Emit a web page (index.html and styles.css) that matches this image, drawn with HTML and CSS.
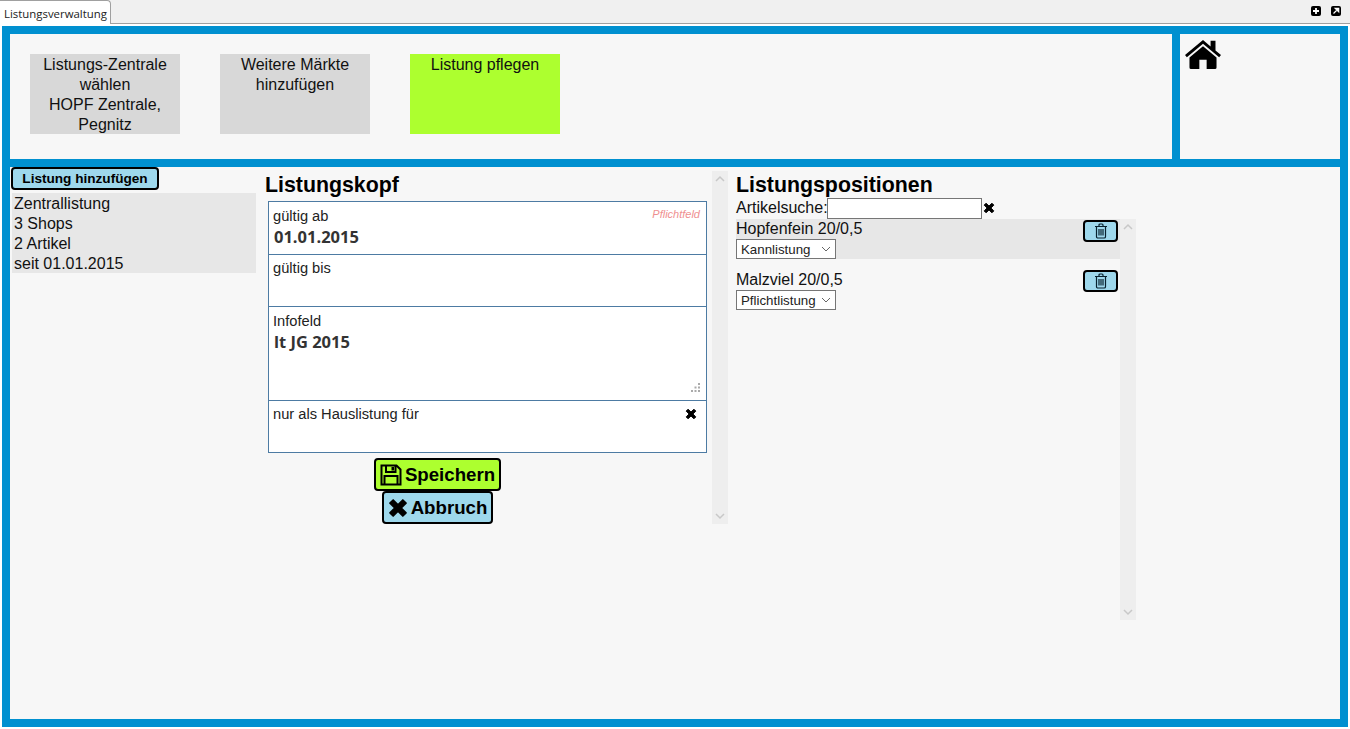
FILE: index.html
```html
<!DOCTYPE html>
<html lang="de">
<head>
<meta charset="utf-8">
<title>Listungsverwaltung</title>
<link rel="stylesheet" href="styles.css">
</head>
<body>
<svg class="defs" width="0" height="0" aria-hidden="true">
  <defs>
    <symbol id="x" viewBox="0 0 12 12"><path d="M1.2 3.1 3.1 1.2 6 4.1 8.9 1.2 10.8 3.1 7.9 6 10.8 8.9 8.9 10.8 6 7.9 3.1 10.8 1.2 8.9 4.1 6Z" fill="currentColor" stroke="currentColor" stroke-width="1" stroke-linejoin="round"/></symbol>
    <symbol id="trash" viewBox="0 0 14 16"><path d="M1 3.5h12M5 3.5V2a1 1 0 0 1 1-1h2a1 1 0 0 1 1 1v1.5M2.5 3.5v10.2A1.3 1.3 0 0 0 3.8 15h6.400a1.300 1.300 0 0 0 1.300-1.300V3.500M5 6v6.500M7 6v6.500M9 6v6.500" fill="none" stroke="currentColor" stroke-width="1.200"/></symbol>
    <symbol id="up" viewBox="0 0 16 16"><path d="M4 10 8 6 12 10" fill="none" stroke="currentColor" stroke-width="1.500"/></symbol>
    <symbol id="down" viewBox="0 0 16 16"><path d="M4 6 8 10 12 6" fill="none" stroke="currentColor" stroke-width="1.500"/></symbol>
  </defs>
</svg>
<header class="tabbar">
  <div class="tab">Listungsverwaltung</div>
  <div class="win-icons">
    <svg class="win-icon" viewBox="0 0 10 10"><rect width="10" height="10" rx="2" fill="#000"/><path d="M5 2v6M2 5h6" stroke="#fff" stroke-width="1.800"/></svg>
    <svg class="win-icon" viewBox="0 0 10 10"><rect width="10" height="10" rx="2" fill="#000"/><path d="M2.500 7.500 6 4M4.200 2.300H7.700V5.800Z" stroke="#fff" stroke-width="1.200" fill="#fff"/></svg>
  </div>
</header>
<main class="frame">
  <section class="top">
    <nav class="steps">
      <div class="step">Listungs-Zentrale wählen<br>HOPF Zentrale, Pegnitz</div>
      <div class="step">Weitere Märkte hinzufügen</div>
      <div class="step step-active">Listung pflegen</div>
    </nav>
    <div class="home">
      <svg class="home-icon" viewBox="0.7 0.8 34.6 28.2" preserveAspectRatio="none"><path d="M18 .8 0.700 15.500 2.500 17.600 18 4.400 33.500 17.600 35.300 15.500 30 11V1.500H25.300V7Z" fill="#000"/><path d="M18 6.800 5 17.800V27.500A1.500 1.500 0 0 0 6.500 29H14.500V20H21.500V29H29.500A1.500 1.500 0 0 0 31 27.500V17.800Z" fill="#000"/></svg>
    </div>
  </section>
  <section class="content">
    <aside class="list-col">
      <button class="btn btn-add">Listung hinzufügen</button>
      <div class="card">Zentrallistung<br>3 Shops<br>2 Artikel<br>seit 01.01.2015</div>
    </aside>
    <section class="head-col">
      <div class="head-main">
        <h2 class="title title-head">Listungskopf</h2>
        <div class="form">
          <div class="row row-std">
            <span class="required">Pflichtfeld</span>
            <div class="label">gültig ab</div>
            <div class="value">01.01.2015</div>
          </div>
          <div class="row row-std">
            <div class="label">gültig bis</div>
          </div>
          <div class="row row-info">
            <div class="label">Infofeld</div>
            <div class="value">lt JG 2015</div>
            <svg class="grip" viewBox="0 0 10 10"><g fill="#aaa"><rect x="8" y="1" width="2" height="2"/><rect x="8" y="4.500" width="2" height="2"/><rect x="8" y="8" width="2" height="2"/><rect x="4.500" y="4.500" width="2" height="2"/><rect x="4.500" y="8" width="2" height="2"/><rect x="1" y="8" width="2" height="2"/></g></svg>
          </div>
          <div class="row row-house">
            <div class="label">nur als Hauslistung für</div>
            <svg class="x-icon"><use href="#x"/></svg>
          </div>
        </div>
        <div class="actions">
          <button class="btn btn-big btn-save">
            <svg class="btn-icon" viewBox="0 0 22 22"><path d="M1.500 1.500H16.500L20.500 5.500V20.500H1.500Z M6 1.500V8H15.500V1.500 M4.500 20.500V12H17.500V20.500" fill="none" stroke="#000" stroke-width="2"/><rect x="11.500" y="3" width="2.500" height="3.500" fill="#000"/></svg>Speichern
          </button>
          <button class="btn btn-big btn-cancel">
            <svg class="btn-icon btn-icon-x"><use href="#x"/></svg>Abbruch
          </button>
        </div>
      </div>
      <div class="scrollbar">
        <svg class="arrow"><use href="#up"/></svg>
        <svg class="arrow"><use href="#down"/></svg>
      </div>
    </section>
    <section class="pos-col">
      <h2 class="title">Listungspositionen</h2>
      <div class="search">
        <label for="artikel">Artikelsuche:</label><input id="artikel" class="search-input" type="text">
        <svg class="x-icon"><use href="#x"/></svg>
      </div>
      <div class="pos-list">
        <div class="pos-items">
          <div class="item item-selected">
            <div class="item-main">
              <div>Hopfenfein 20/0,5</div>
              <select class="sel"><option>Kannlistung</option></select>
            </div>
            <button class="btn btn-trash"><svg class="trash-icon"><use href="#trash"/></svg></button>
          </div>
          <div class="item">
            <div class="item-main">
              <div>Malzviel 20/0,5</div>
              <select class="sel"><option>Pflichtlistung</option></select>
            </div>
            <button class="btn btn-trash"><svg class="trash-icon"><use href="#trash"/></svg></button>
          </div>
        </div>
        <div class="scrollbar">
          <svg class="arrow"><use href="#up"/></svg>
          <svg class="arrow"><use href="#down"/></svg>
        </div>
      </div>
    </section>
  </section>
</main>
</body>
</html>
```
FILE: styles.css
```css
* { box-sizing: border-box; }
html, body { margin: 0; height: 100%; }
body {
  width: 1350px;
  height: 729px;
  overflow: hidden;
  background: #fff;
  color: #111;
  font-family: "Liberation Sans", Arial, sans-serif;
  font-size: 16px;
  line-height: 20px;
}
.defs { position: absolute; }
.tabbar {
  height: 24px;
  margin-bottom: 2px;
  background: #f0f0f0;
  border-bottom: 1px solid #a0a0a0;
  display: flex;
  justify-content: space-between;
}
.tab {
  width: 111px;
  height: 24px;
  background: #fff;
  border: 1px solid #a0a0a0;
  border-left: 0;
  border-bottom: 0;
  border-radius: 0 4px 0 0;
  padding: 4px 0 0 4px;
  font-family: "Open Sans", sans-serif;
  font-size: 11.4px;
  line-height: 18px;
  color: #222;
  white-space: nowrap;
}
.win-icons { display: flex; gap: 10px; padding: 6px 9px 0 0; }
.win-icon { width: 10px; height: 10px; }
.frame {
  margin: 0 2px;
  height: 701px;
  display: flex;
  flex-direction: column;
  gap: 8px;
  background: #0090d0;
  border: 8px solid #0090d0;
}
.top { height: 125px; display: flex; gap: 8px; }
.steps {
  width: 1162px;
  background: #f7f7f7;
  display: flex;
  gap: 40px;
  padding: 20px;
}
.step {
  width: 150px;
  height: 80px;
  padding-top: 1px;
  background: #d8d8d8;
  text-align: center;
}
.step-active { background: #adff2f; }
.home { flex: 1; background: #f7f7f7; padding: 6px 5px; }
.home-icon { display: block; width: 36px; height: 29px; }
.content {
  flex: 1;
  background: #f7f7f7;
  display: flex;
  align-items: flex-start;
}
.list-col { width: 245px; margin-left: 1px; margin-right: 9px; }
.btn {
  display: flex;
  align-items: center;
  justify-content: center;
  padding: 0;
  border: 2px solid #000;
  border-radius: 4px;
  background: #9ed8ec;
  color: #000;
  font-family: "Liberation Sans", Arial, sans-serif;
  font-weight: bold;
}
.btn-add { width: 148px; height: 23px; font-size: 13.600px; }
.card {
  margin: 3px 0 0 1px;
  height: 80px;
  padding: 1px 0 0 2px;
  background: #e7e7e7;
}
.head-col { display: flex; width: 463px; margin-right: 8px; margin-top: 4px; }
.head-main { width: 447px; }
.title {
  margin: 0;
  height: 26px;
  font-size: 21.330px;
  line-height: 28px;
  font-weight: bold;
  color: #000;
}
.title-head { margin-bottom: 4px; }
.form {
  width: 439px;
  margin: 0 0 0 3px;
  border: 1px solid #4d7ba3;
  background: #fff;
}
.row {
  position: relative;
  padding: 5px 4px 0;
  border-bottom: 1px solid #4d7ba3;
}
.row:last-child { border-bottom: 0; }
.row-std { height: 53px; }
.row-std + .row-std { height: 52px; padding-top: 4px; }
.row-info { height: 94px; }
.row-house { height: 51px; padding-top: 4px; }
.label { font-size: 14.670px; line-height: 19px; color: #222; }
.value {
  margin-top: -1px;
  padding-left: 1px;
  font-family: "Open Sans", sans-serif;
  font-size: 16.500px;
  line-height: 23px;
  font-weight: 700;
  color: #333;
}
.required {
  position: absolute;
  top: 5px;
  right: 6px;
  font-size: 11px;
  line-height: 14px;
  font-style: italic;
  color: #ef8f8f;
}
.grip { position: absolute; right: 6px; bottom: 8px; width: 10px; height: 10px; }
.x-icon { width: 12px; height: 12px; color: #000; flex: none; }
.row-house .x-icon { position: absolute; top: 7px; right: 9px; }
.actions {
  display: flex;
  flex-direction: column;
  align-items: center;
  width: 345px;
  margin-top: 5px;
}
.btn-big { height: 33px; font-size: 18.670px; gap: 3px; }
.btn-save { width: 127px; background: #adff2f; }
.btn-cancel { width: 111px; }
.btn-icon { width: 22px; height: 22px; flex: none; }
.btn-icon-x { width: 20px; height: 20px; }
.scrollbar {
  width: 16px;
  background: #eee;
  display: flex;
  flex-direction: column;
  justify-content: space-between;
  color: #c8c8c8;
}
.head-col > .scrollbar { height: 353px; }
.arrow { width: 16px; height: 16px; display: block; }
.pos-col { width: 400px; margin-top: 4px; }
.search { display: flex; align-items: center; height: 22px; }
.search-input {
  width: 155px;
  height: 21px;
  margin: 0 0 0 -1px;
  padding: 0 2px;
  border: 1px solid #767676;
  background: #fff;
}
.search .x-icon { margin-left: 1px; }
.pos-list { display: flex; }
.pos-list > .scrollbar { height: 401px; }
.pos-items { width: 384px; }
.item {
  display: flex;
  justify-content: space-between;
  align-items: flex-start;
  height: 40px;
  margin-bottom: 10px;
  padding: 1px 2px 0 0;
}
.item-selected { background: #e7e7e7; }
.item-main { margin-top: -1px; }
.item + .item .item-main { margin-top: 0; }
.sel {
  display: block;
  width: 100px;
  height: 20px;
  padding: 0 0 0 4px;
  border: 1px solid #767676;
  border-radius: 0;
  appearance: none;
  background: #fff url("data:image/svg+xml,%3Csvg xmlns='http://www.w3.org/2000/svg' width='10' height='6'%3E%3Cpath d='M1 1l4 4 4-4' fill='none' stroke='%23666'/%3E%3C/svg%3E") no-repeat right 4px center;
  color: #222;
  font-family: "Liberation Sans", Arial, sans-serif;
  font-size: 13.300px;
}
.btn-trash { width: 35px; height: 22px; }
.trash-icon { width: 14px; height: 16px; color: #06202e; }
```
